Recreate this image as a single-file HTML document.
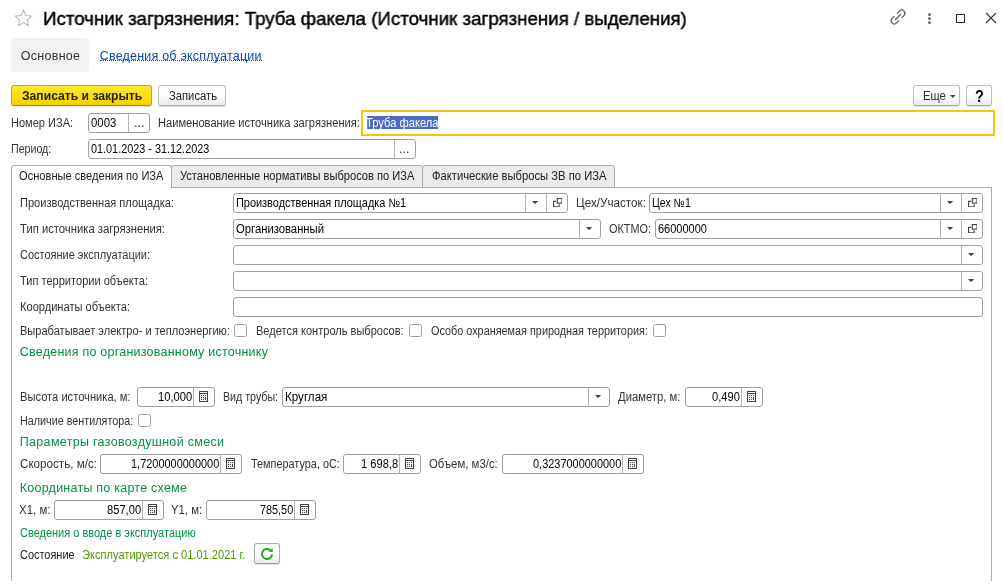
<!DOCTYPE html><html lang="ru"><head><meta charset="utf-8"><title>Источник загрязнения</title><style>
html,body{margin:0;padding:0;background:#fff;}
body{width:1003px;height:586px;position:relative;overflow:hidden;font-family:"Liberation Sans", "DejaVu Sans", sans-serif;}
#b div,#b svg,#t span{position:absolute;display:block;}
#t{will-change:transform;}
#t span{white-space:nowrap;line-height:1;transform-origin:0 50%;}

</style></head><body>
<div id="b">
<div style="left:100px;top:60px;width:162px;height:0px;border-top:1px dotted #0b47b0;"></div>
<div style="left:11px;top:38px;width:78px;height:34px;background:#f2f2f2;border-radius:3px;"></div>
<div style="left:11px;top:85px;width:141px;height:21px;border:1px solid #c8ab00;border-bottom-color:#a89000;border-radius:3px;box-sizing:border-box;background:linear-gradient(#ffe92e,#f4d200);box-shadow:0 1px 1px rgba(0,0,0,.12);"></div>
<div style="left:158px;top:85px;width:68px;height:21px;border:1px solid #bdbdbd;border-bottom-color:#a6a6a6;border-radius:3px;box-sizing:border-box;background:linear-gradient(#ffffff 40%,#ececec);box-shadow:0 1px 1px rgba(0,0,0,.12);"></div>
<div style="left:913px;top:85px;width:47px;height:21px;border:1px solid #bdbdbd;border-bottom-color:#a6a6a6;border-radius:3px;box-sizing:border-box;background:linear-gradient(#ffffff 40%,#ececec);box-shadow:0 1px 1px rgba(0,0,0,.12);"></div>
<div style="left:966px;top:85px;width:26px;height:21px;border:1px solid #bdbdbd;border-bottom-color:#a6a6a6;border-radius:3px;box-sizing:border-box;background:linear-gradient(#ffffff 40%,#ececec);box-shadow:0 1px 1px rgba(0,0,0,.12);"></div>
<svg style="left:949.7px;top:95px" width="5.6" height="3" viewBox="0 0 5.6 3"><path d="M0 0h5.6l-2.8 3z" fill="#444"/></svg>
<div style="left:88px;top:113px;width:62px;height:20px;border:1px solid #a0a0a0;border-radius:3px;background:#fff;box-sizing:border-box;"></div>
<div style="left:128px;top:114px;width:1px;height:18px;background:#b4b4b4;"></div>
<div style="left:361px;top:110px;width:634px;height:26px;border:2px solid #f9c30d;box-sizing:border-box;background:#fff;"></div>
<div style="left:367px;top:116px;width:71px;height:13px;background:#4d6ac5;"></div>
<div style="left:367px;top:116px;width:1px;height:13px;background:#b08a2a;"></div>
<div style="left:88px;top:139px;width:328px;height:20px;border:1px solid #a0a0a0;border-radius:3px;background:#fff;box-sizing:border-box;"></div>
<div style="left:394px;top:140px;width:1px;height:18px;background:#b4b4b4;"></div>
<div style="left:171px;top:165px;width:252px;height:23px;border:1px solid #adadad;box-sizing:border-box;background:#ebebeb;border-radius:3px 3px 0 0;"></div>
<div style="left:422px;top:165px;width:193px;height:23px;border:1px solid #adadad;box-sizing:border-box;background:#ebebeb;border-radius:3px 3px 0 0;"></div>
<div style="left:11px;top:187px;width:981px;height:394px;border:1px solid #adadad;border-bottom:none;box-sizing:border-box;background:#fff;"></div>
<div style="left:11px;top:165px;width:161px;height:23px;border:1px solid #adadad;border-bottom:none;box-sizing:border-box;background:#fff;border-radius:3px 3px 0 0;"></div>
<div style="left:233px;top:193px;width:335px;height:20px;border:1px solid #a0a0a0;border-radius:3px;background:#fff;box-sizing:border-box;"></div>
<div style="left:546px;top:194px;width:1px;height:18px;background:#b4b4b4;"></div>
<svg style="left:552.5px;top:198px" width="9.6" height="9.3" viewBox="0 0 10 10" preserveAspectRatio="none" fill="none" stroke="#444" stroke-width="1.2"><rect x="4.5" y="0.6" width="4.9" height="4.9"/><path d="M3.2 3.6H0.6v5.8h5.8V6.8"/></svg>
<div style="left:525px;top:194px;width:1px;height:18px;background:#b4b4b4;"></div>
<svg style="left:532.4px;top:201.1px" width="6.2" height="3.2" viewBox="0 0 6.2 3.2"><path d="M0 0h6.2l-3.1 3.2z" fill="#444"/></svg>
<div style="left:649px;top:193px;width:334px;height:20px;border:1px solid #a0a0a0;border-radius:3px;background:#fff;box-sizing:border-box;"></div>
<div style="left:961px;top:194px;width:1px;height:18px;background:#b4b4b4;"></div>
<svg style="left:967.5px;top:198px" width="9.6" height="9.3" viewBox="0 0 10 10" preserveAspectRatio="none" fill="none" stroke="#444" stroke-width="1.2"><rect x="4.5" y="0.6" width="4.9" height="4.9"/><path d="M3.2 3.6H0.6v5.8h5.8V6.8"/></svg>
<div style="left:940px;top:194px;width:1px;height:18px;background:#b4b4b4;"></div>
<svg style="left:947.4px;top:201.1px" width="6.2" height="3.2" viewBox="0 0 6.2 3.2"><path d="M0 0h6.2l-3.1 3.2z" fill="#444"/></svg>
<div style="left:233px;top:219px;width:368px;height:20px;border:1px solid #a0a0a0;border-radius:3px;background:#fff;box-sizing:border-box;"></div>
<div style="left:579px;top:220px;width:1px;height:18px;background:#b4b4b4;"></div>
<svg style="left:586.4px;top:227.1px" width="6.2" height="3.2" viewBox="0 0 6.2 3.2"><path d="M0 0h6.2l-3.1 3.2z" fill="#444"/></svg>
<div style="left:655px;top:219px;width:328px;height:20px;border:1px solid #a0a0a0;border-radius:3px;background:#fff;box-sizing:border-box;"></div>
<div style="left:961px;top:220px;width:1px;height:18px;background:#b4b4b4;"></div>
<svg style="left:967.5px;top:224px" width="9.6" height="9.3" viewBox="0 0 10 10" preserveAspectRatio="none" fill="none" stroke="#444" stroke-width="1.2"><rect x="4.5" y="0.6" width="4.9" height="4.9"/><path d="M3.2 3.6H0.6v5.8h5.8V6.8"/></svg>
<div style="left:940px;top:220px;width:1px;height:18px;background:#b4b4b4;"></div>
<svg style="left:947.4px;top:227.1px" width="6.2" height="3.2" viewBox="0 0 6.2 3.2"><path d="M0 0h6.2l-3.1 3.2z" fill="#444"/></svg>
<div style="left:233px;top:245px;width:750px;height:20px;border:1px solid #a0a0a0;border-radius:3px;background:#fff;box-sizing:border-box;"></div>
<div style="left:961px;top:246px;width:1px;height:18px;background:#b4b4b4;"></div>
<svg style="left:968.4px;top:253.1px" width="6.2" height="3.2" viewBox="0 0 6.2 3.2"><path d="M0 0h6.2l-3.1 3.2z" fill="#444"/></svg>
<div style="left:233px;top:271px;width:750px;height:20px;border:1px solid #a0a0a0;border-radius:3px;background:#fff;box-sizing:border-box;"></div>
<div style="left:961px;top:272px;width:1px;height:18px;background:#b4b4b4;"></div>
<svg style="left:968.4px;top:279.1px" width="6.2" height="3.2" viewBox="0 0 6.2 3.2"><path d="M0 0h6.2l-3.1 3.2z" fill="#444"/></svg>
<div style="left:233px;top:297px;width:750px;height:20px;border:1px solid #a0a0a0;border-radius:3px;background:#fff;box-sizing:border-box;"></div>
<div style="left:234px;top:324px;width:13px;height:13px;border:1px solid #a0a0a0;border-radius:2.5px;background:#fff;box-sizing:border-box;"></div>
<div style="left:409px;top:324px;width:13px;height:13px;border:1px solid #a0a0a0;border-radius:2.5px;background:#fff;box-sizing:border-box;"></div>
<div style="left:653px;top:324px;width:13px;height:13px;border:1px solid #a0a0a0;border-radius:2.5px;background:#fff;box-sizing:border-box;"></div>
<div style="left:137px;top:387px;width:78px;height:20px;border:1px solid #a0a0a0;border-radius:3px;background:#fff;box-sizing:border-box;"></div>
<div style="left:193px;top:388px;width:1px;height:18px;background:#b4b4b4;"></div>
<svg style="left:199px;top:391px" width="9" height="11" viewBox="0 0 9 11" shape-rendering="crispEdges"><rect x="0.5" y="0.5" width="8" height="10" fill="#f6f6f6" stroke="#444"/><rect x="1" y="1" width="7" height="1" fill="#fff"/><rect x="1" y="2" width="7" height="1" fill="#444"/><g fill="#444"><rect x="2" y="4" width="1" height="1"/><rect x="4" y="4" width="1" height="1"/><rect x="6" y="4" width="1" height="1"/><rect x="2" y="6" width="1" height="1"/><rect x="4" y="6" width="1" height="1"/><rect x="6" y="6" width="1" height="3"/><rect x="2" y="8" width="1" height="1"/><rect x="4" y="8" width="1" height="1"/></g></svg>
<div style="left:282px;top:387px;width:328px;height:20px;border:1px solid #a0a0a0;border-radius:3px;background:#fff;box-sizing:border-box;"></div>
<div style="left:588px;top:388px;width:1px;height:18px;background:#b4b4b4;"></div>
<svg style="left:595.4px;top:395.1px" width="6.2" height="3.2" viewBox="0 0 6.2 3.2"><path d="M0 0h6.2l-3.1 3.2z" fill="#444"/></svg>
<div style="left:685px;top:387px;width:78px;height:20px;border:1px solid #a0a0a0;border-radius:3px;background:#fff;box-sizing:border-box;"></div>
<div style="left:741px;top:388px;width:1px;height:18px;background:#b4b4b4;"></div>
<svg style="left:747px;top:391px" width="9" height="11" viewBox="0 0 9 11" shape-rendering="crispEdges"><rect x="0.5" y="0.5" width="8" height="10" fill="#f6f6f6" stroke="#444"/><rect x="1" y="1" width="7" height="1" fill="#fff"/><rect x="1" y="2" width="7" height="1" fill="#444"/><g fill="#444"><rect x="2" y="4" width="1" height="1"/><rect x="4" y="4" width="1" height="1"/><rect x="6" y="4" width="1" height="1"/><rect x="2" y="6" width="1" height="1"/><rect x="4" y="6" width="1" height="1"/><rect x="6" y="6" width="1" height="3"/><rect x="2" y="8" width="1" height="1"/><rect x="4" y="8" width="1" height="1"/></g></svg>
<div style="left:138px;top:414px;width:13px;height:13px;border:1px solid #a0a0a0;border-radius:2.5px;background:#fff;box-sizing:border-box;"></div>
<div style="left:100px;top:454px;width:142px;height:20px;border:1px solid #a0a0a0;border-radius:3px;background:#fff;box-sizing:border-box;"></div>
<div style="left:220px;top:455px;width:1px;height:18px;background:#b4b4b4;"></div>
<svg style="left:226px;top:458px" width="9" height="11" viewBox="0 0 9 11" shape-rendering="crispEdges"><rect x="0.5" y="0.5" width="8" height="10" fill="#f6f6f6" stroke="#444"/><rect x="1" y="1" width="7" height="1" fill="#fff"/><rect x="1" y="2" width="7" height="1" fill="#444"/><g fill="#444"><rect x="2" y="4" width="1" height="1"/><rect x="4" y="4" width="1" height="1"/><rect x="6" y="4" width="1" height="1"/><rect x="2" y="6" width="1" height="1"/><rect x="4" y="6" width="1" height="1"/><rect x="6" y="6" width="1" height="3"/><rect x="2" y="8" width="1" height="1"/><rect x="4" y="8" width="1" height="1"/></g></svg>
<div style="left:343px;top:454px;width:78px;height:20px;border:1px solid #a0a0a0;border-radius:3px;background:#fff;box-sizing:border-box;"></div>
<div style="left:399px;top:455px;width:1px;height:18px;background:#b4b4b4;"></div>
<svg style="left:405px;top:458px" width="9" height="11" viewBox="0 0 9 11" shape-rendering="crispEdges"><rect x="0.5" y="0.5" width="8" height="10" fill="#f6f6f6" stroke="#444"/><rect x="1" y="1" width="7" height="1" fill="#fff"/><rect x="1" y="2" width="7" height="1" fill="#444"/><g fill="#444"><rect x="2" y="4" width="1" height="1"/><rect x="4" y="4" width="1" height="1"/><rect x="6" y="4" width="1" height="1"/><rect x="2" y="6" width="1" height="1"/><rect x="4" y="6" width="1" height="1"/><rect x="6" y="6" width="1" height="3"/><rect x="2" y="8" width="1" height="1"/><rect x="4" y="8" width="1" height="1"/></g></svg>
<div style="left:502px;top:454px;width:142px;height:20px;border:1px solid #a0a0a0;border-radius:3px;background:#fff;box-sizing:border-box;"></div>
<div style="left:622px;top:455px;width:1px;height:18px;background:#b4b4b4;"></div>
<svg style="left:628px;top:458px" width="9" height="11" viewBox="0 0 9 11" shape-rendering="crispEdges"><rect x="0.5" y="0.5" width="8" height="10" fill="#f6f6f6" stroke="#444"/><rect x="1" y="1" width="7" height="1" fill="#fff"/><rect x="1" y="2" width="7" height="1" fill="#444"/><g fill="#444"><rect x="2" y="4" width="1" height="1"/><rect x="4" y="4" width="1" height="1"/><rect x="6" y="4" width="1" height="1"/><rect x="2" y="6" width="1" height="1"/><rect x="4" y="6" width="1" height="1"/><rect x="6" y="6" width="1" height="3"/><rect x="2" y="8" width="1" height="1"/><rect x="4" y="8" width="1" height="1"/></g></svg>
<div style="left:54px;top:500px;width:110px;height:20px;border:1px solid #a0a0a0;border-radius:3px;background:#fff;box-sizing:border-box;"></div>
<div style="left:142px;top:501px;width:1px;height:18px;background:#b4b4b4;"></div>
<svg style="left:148px;top:504px" width="9" height="11" viewBox="0 0 9 11" shape-rendering="crispEdges"><rect x="0.5" y="0.5" width="8" height="10" fill="#f6f6f6" stroke="#444"/><rect x="1" y="1" width="7" height="1" fill="#fff"/><rect x="1" y="2" width="7" height="1" fill="#444"/><g fill="#444"><rect x="2" y="4" width="1" height="1"/><rect x="4" y="4" width="1" height="1"/><rect x="6" y="4" width="1" height="1"/><rect x="2" y="6" width="1" height="1"/><rect x="4" y="6" width="1" height="1"/><rect x="6" y="6" width="1" height="3"/><rect x="2" y="8" width="1" height="1"/><rect x="4" y="8" width="1" height="1"/></g></svg>
<div style="left:206px;top:500px;width:110px;height:20px;border:1px solid #a0a0a0;border-radius:3px;background:#fff;box-sizing:border-box;"></div>
<div style="left:294px;top:501px;width:1px;height:18px;background:#b4b4b4;"></div>
<svg style="left:300px;top:504px" width="9" height="11" viewBox="0 0 9 11" shape-rendering="crispEdges"><rect x="0.5" y="0.5" width="8" height="10" fill="#f6f6f6" stroke="#444"/><rect x="1" y="1" width="7" height="1" fill="#fff"/><rect x="1" y="2" width="7" height="1" fill="#444"/><g fill="#444"><rect x="2" y="4" width="1" height="1"/><rect x="4" y="4" width="1" height="1"/><rect x="6" y="4" width="1" height="1"/><rect x="2" y="6" width="1" height="1"/><rect x="4" y="6" width="1" height="1"/><rect x="6" y="6" width="1" height="3"/><rect x="2" y="8" width="1" height="1"/><rect x="4" y="8" width="1" height="1"/></g></svg>
<div style="left:254px;top:543px;width:26px;height:21px;border:1px solid #ababab;border-bottom-color:#999;border-radius:3px;box-sizing:border-box;background:linear-gradient(#ffffff 45%,#ececec);box-shadow:0 1px 1px rgba(0,0,0,.12);"></div>
<svg style="left:258px;top:545px" width="18" height="18" viewBox="258 545 18 18"><path d="M272.1 554.4A5.05 5.05 0 1 1 270.3 550.1" fill="none" stroke="#25a325" stroke-width="1.95"/><path d="M268 551.6L272.7 547.9V551.9z" fill="#25a325"/></svg>
<svg style="left:13.6px;top:9.3px" width="19" height="18" viewBox="0 0 19 18"><path d="M9.5 1.2l2.4 5.3 5.7.6-4.3 3.8 1.2 5.6-5-2.9-5 2.9 1.2-5.6L1.4 7.1l5.7-.6z" fill="none" stroke="#b4b9bf" stroke-width="1.05" stroke-linejoin="miter"/></svg>
<svg style="left:887.5px;top:7.3px" width="20" height="20" viewBox="-10 -10 20 20" fill="none" stroke="#5a5a5a" stroke-width="1.2" stroke-linecap="round"><g transform="rotate(-45)"><path d="M2.4 -3.2H5.2A3.2 3.2 0 0 1 5.2 3.2H2.4"/><path d="M-2.4 3.2H-5.2A3.2 3.2 0 0 1 -5.2 -3.2H-2.4"/><path d="M-3.6 0H3.6"/></g></svg>
<div style="left:927.9px;top:12.9px;width:3px;height:3px;background:#6a6a6a;border-radius:50%;"></div>
<div style="left:927.9px;top:16.9px;width:3px;height:3px;background:#6a6a6a;border-radius:50%;"></div>
<div style="left:927.9px;top:20.9px;width:3px;height:3px;background:#6a6a6a;border-radius:50%;"></div>
<div style="left:956px;top:14px;width:9px;height:9px;border:1px solid #2a2a2a;box-sizing:border-box;"></div>
<svg style="left:985px;top:12px" width="12" height="12" viewBox="0 0 12 12"><path d="M1 1l10 10M11 1L1 11" stroke="#333" stroke-width="1.1"/></svg>
</div>
<div id="t">
<span style="left:43.065px;top:8.7px;font-size:19px;color:#000;-webkit-text-stroke:0.45px #000;transform:scaleX(0.9842);">Источник загрязнения: Труба факела (Источник загрязнения / выделения)</span>
<span style="left:20.6875px;top:49.75px;font-size:12.5px;color:#333;letter-spacing:0.295px;">Основное</span>
<span style="left:99.6875px;top:49.75px;font-size:12.5px;color:#0b47b0;letter-spacing:0.213px;">Сведения об эксплуатации</span>
<span style="left:21.82px;top:90px;font-size:12px;color:#2b2200;font-weight:bold;transform:scaleX(1.0113);">Записать и закрыть</span>
<span style="left:168.52px;top:90px;font-size:12px;color:#222;transform:scaleX(0.9357);">Записать</span>
<span style="left:923.02px;top:90px;font-size:12px;color:#333;transform:scaleX(0.9369);">Еще</span>
<span style="left:974.76px;top:88.5px;font-size:16px;color:#000;font-weight:bold;transform:scaleX(0.9075);">?</span>
<span style="left:11.22px;top:117px;font-size:12px;color:#333;transform:scaleX(0.9199);">Номер ИЗА:</span>
<span style="left:90.72px;top:117px;font-size:12px;color:#000;transform:scaleX(0.9468);">0003</span>
<span style="left:134.22px;top:117px;font-size:12px;color:#333;transform:scaleX(1.0466);">...</span>
<span style="left:158.42px;top:117px;font-size:12px;color:#333;transform:scaleX(0.9275);">Наименование источника загрязнения:</span>
<span style="left:366.22px;top:117px;font-size:12px;color:#fff;transform:scaleX(0.9313);">Труба факела</span>
<span style="left:11.22px;top:143px;font-size:12px;color:#333;transform:scaleX(0.8868);">Период:</span>
<span style="left:90.72px;top:143px;font-size:12px;color:#000;transform:scaleX(0.9044);">01.01.2023 - 31.12.2023</span>
<span style="left:399.22px;top:143px;font-size:12px;color:#333;transform:scaleX(1.0466);">...</span>
<span style="left:19.22px;top:170px;font-size:12px;color:#222;transform:scaleX(0.9253);">Основные сведения по ИЗА</span>
<span style="left:180.02px;top:170px;font-size:12px;color:#222;transform:scaleX(0.9260);">Установленные нормативы выбросов по ИЗА</span>
<span style="left:432.22px;top:170px;font-size:12px;color:#222;transform:scaleX(0.9360);">Фактические выбросы ЗВ по ИЗА</span>
<span style="left:19.72px;top:197px;font-size:12px;color:#333;transform:scaleX(0.9199);">Производственная площадка:</span>
<span style="left:236.22px;top:197px;font-size:12px;color:#000;transform:scaleX(0.9104);">Производственная площадка №1</span>
<span style="left:575.82px;top:197px;font-size:12px;color:#333;transform:scaleX(0.9733);">Цех/Участок:</span>
<span style="left:651.62px;top:197px;font-size:12px;color:#000;transform:scaleX(0.8780);">Цех №1</span>
<span style="left:19.72px;top:223px;font-size:12px;color:#333;transform:scaleX(0.9385);">Тип источника загрязнения:</span>
<span style="left:236.22px;top:223px;font-size:12px;color:#000;transform:scaleX(0.9393);">Организованный</span>
<span style="left:609.02px;top:223px;font-size:12px;color:#333;transform:scaleX(0.9062);">ОКТМО:</span>
<span style="left:657.82px;top:223px;font-size:12px;color:#000;transform:scaleX(0.9174);">66000000</span>
<span style="left:19.72px;top:249px;font-size:12px;color:#333;transform:scaleX(0.9144);">Состояние эксплуатации:</span>
<span style="left:19.72px;top:275px;font-size:12px;color:#333;transform:scaleX(0.9210);">Тип территории объекта:</span>
<span style="left:19.72px;top:301px;font-size:12px;color:#333;transform:scaleX(0.9241);">Координаты объекта:</span>
<span style="left:19.72px;top:325px;font-size:12px;color:#333;transform:scaleX(0.9205);">Вырабатывает электро- и теплоэнергию:</span>
<span style="left:256.22px;top:325px;font-size:12px;color:#333;transform:scaleX(0.9202);">Ведется контроль выбросов:</span>
<span style="left:431.22px;top:325px;font-size:12px;color:#333;transform:scaleX(0.9041);">Особо охраняемая природная территория:</span>
<span style="left:19.7875px;top:346.15px;font-size:12.5px;color:#009142;letter-spacing:0.232px;">Сведения по организованному источнику</span>
<span style="left:19.72px;top:391px;font-size:12px;color:#333;transform:scaleX(0.9289);">Высота источника, м:</span>
<span style="left:157.72px;top:391px;font-size:12px;color:#000;transform:scaleX(0.9313);">10,000</span>
<span style="left:222.82px;top:391px;font-size:12px;color:#333;transform:scaleX(0.8877);">Вид трубы:</span>
<span style="left:284.82000000000005px;top:391px;font-size:12px;color:#000;transform:scaleX(0.9670);">Круглая</span>
<span style="left:618.22px;top:391px;font-size:12px;color:#333;transform:scaleX(0.9402);">Диаметр, м:</span>
<span style="left:712.02px;top:391px;font-size:12px;color:#000;transform:scaleX(0.9284);">0,490</span>
<span style="left:19.72px;top:415px;font-size:12px;color:#333;transform:scaleX(0.8985);">Наличие вентилятора:</span>
<span style="left:19.7875px;top:436.15px;font-size:12.5px;color:#009142;letter-spacing:0.314px;">Параметры газовоздушной смеси</span>
<span style="left:19.52px;top:458px;font-size:12px;color:#333;transform:scaleX(0.9695);">Скорость, м/с:</span>
<span style="left:130.82px;top:458px;font-size:12px;color:#000;transform:scaleX(0.9122);">1,7200000000000</span>
<span style="left:250.62px;top:458px;font-size:12px;color:#333;transform:scaleX(0.9067);">Температура, оС:</span>
<span style="left:361.42px;top:458px;font-size:12px;color:#000;transform:scaleX(0.9260);">1 698,8</span>
<span style="left:428.92px;top:458px;font-size:12px;color:#333;transform:scaleX(0.9487);">Объем, м3/с:</span>
<span style="left:532.9200000000001px;top:458px;font-size:12px;color:#000;transform:scaleX(0.9122);">0,3237000000000</span>
<span style="left:19.7875px;top:482.15px;font-size:12.5px;color:#009142;letter-spacing:0.241px;">Координаты по карте схеме</span>
<span style="left:19.02px;top:504px;font-size:12px;color:#333;transform:scaleX(0.9558);">X1, м:</span>
<span style="left:106.72px;top:504px;font-size:12px;color:#000;transform:scaleX(0.9286);">857,00</span>
<span style="left:171.22px;top:504px;font-size:12px;color:#333;transform:scaleX(0.9437);">Y1, м:</span>
<span style="left:259.52000000000004px;top:504px;font-size:12px;color:#000;transform:scaleX(0.9041);">785,50</span>
<span style="left:19.82px;top:527.3px;font-size:12px;color:#009142;transform:scaleX(0.9159);">Сведения о вводе в эксплуатацию</span>
<span style="left:19.82px;top:548.5px;font-size:12px;color:#222;transform:scaleX(0.9114);">Состояние</span>
<span style="left:81.82px;top:548.5px;font-size:12px;color:#4c9a00;transform:scaleX(0.9239);">Эксплуатируется с 01.01.2021 г.</span>
</div></body></html>
